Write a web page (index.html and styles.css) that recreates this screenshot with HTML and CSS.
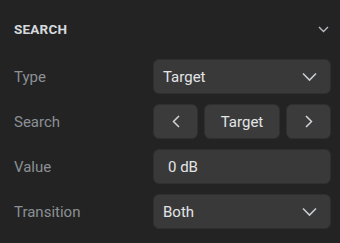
FILE: index.html
```html
<!DOCTYPE html>
<html>
<head>
<meta charset="utf-8">
<link rel="stylesheet" href="styles.css">
</head>
<body>
<div class="panel">
  <div class="header">
    <span class="title">SEARCH</span>
    <svg class="hchev" width="11" height="7" viewBox="0 0 11 7"><path d="M1 1 L5.5 5.5 L10 1" fill="none" stroke="#b8bcc0" stroke-width="1.4"/></svg>
  </div>
  <div class="rows">
    <div class="label">Type</div>
    <div class="box select"><span>Target</span>
      <svg width="15" height="10" viewBox="0 0 15 10"><path d="M1 1.5 L7.5 8 L14 1.5" fill="none" stroke="#c8ccd0" stroke-width="1.6"/></svg>
    </div>
    <div class="label">Search</div>
    <div class="stepper">
      <div class="box btn"><svg width="8" height="13" viewBox="0 0 8 13"><path d="M7 1 L1.5 6.5 L7 12" fill="none" stroke="#d0d4d8" stroke-width="1.5"/></svg></div>
      <div class="box btn mid">Target</div>
      <div class="box btn"><svg width="8" height="13" viewBox="0 0 8 13"><path d="M1 1 L6.5 6.5 L1 12" fill="none" stroke="#d0d4d8" stroke-width="1.5"/></svg></div>
    </div>
    <div class="label">Value</div>
    <div class="box input"><span>0 dB</span></div>
    <div class="label">Transition</div>
    <div class="box select"><span>Both</span>
      <svg width="15" height="10" viewBox="0 0 15 10"><path d="M1 1.5 L7.5 8 L14 1.5" fill="none" stroke="#c8ccd0" stroke-width="1.6"/></svg>
    </div>
  </div>
</div>
</body>
</html>
```
FILE: styles.css
```css
html, body {
  margin: 0;
  padding: 0;
  background: #232323;
}
.panel {
  width: 340px;
  height: 243px;
  box-sizing: border-box;
  padding: 0 9px 0 14px;
  font-family: Roboto, "Noto Sans", sans-serif;
}
.header {
  height: 59px;
  display: flex;
  align-items: center;
  justify-content: space-between;
  padding-right: 2px;
  box-sizing: border-box;
  padding-bottom: 1px;
}
.title {
  font-size: 13.5px;
  font-weight: 700;
  color: #d6dade;
  letter-spacing: 0.2px;
}
.hchev {
  display: block;
}
.rows {
  display: grid;
  grid-template-columns: 139px 1fr;
  row-gap: 10px;
  align-items: center;
}
.label {
  font-size: 15px;
  color: #8b9095;
}
.box {
  height: 35px;
  box-sizing: border-box;
  background: #393939;
  border: 1px solid #2f2f2f;
  border-radius: 6px;
  color: #e2e5e8;
  font-size: 15px;
  display: flex;
  align-items: center;
}
.select {
  justify-content: space-between;
  padding: 0 13px 0 9px;
}
.input {
  padding: 0 14px;
}
.stepper {
  display: flex;
  gap: 6px;
}
.btn {
  width: 45px;
  justify-content: center;
  background: #3b3b3b;
}
.btn.mid {
  width: auto;
  flex: 1;
}
```
